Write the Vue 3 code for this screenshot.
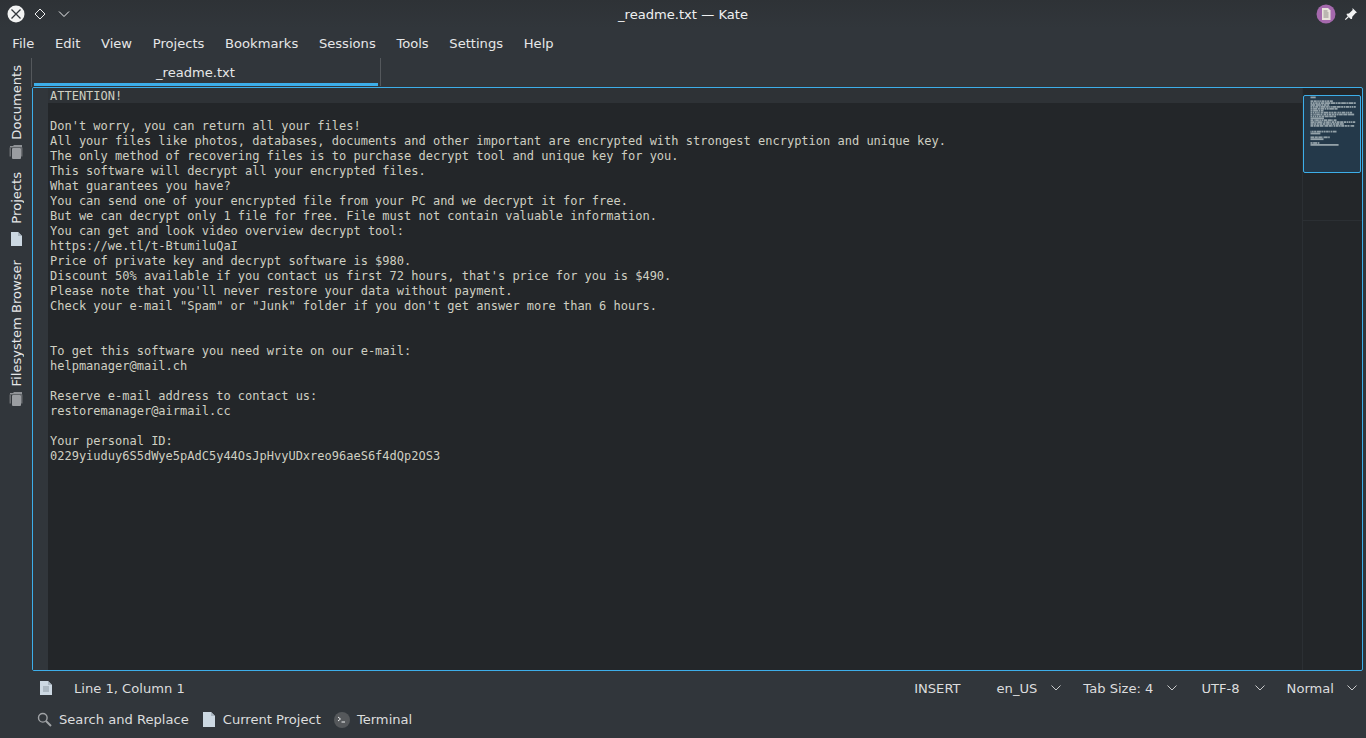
<template>
  <div class="window">
    <div class="titlebar">
      <div class="title-left">
        <svg class="ic-close" width="18" height="18" viewBox="0 0 18 18">
          <circle cx="9" cy="9" r="8.5" fill="#f2f3f3" />
          <path d="M4.5 4.5l9 9M13.5 4.5l-9 9" stroke="#31363b" stroke-width="1.3" />
        </svg>
        <svg class="ic-diamond" width="12" height="12" viewBox="0 0 12 12">
          <path d="M6 1l5 5-5 5-5-5z" fill="none" stroke="#eff0f1" stroke-width="1" />
        </svg>
        <svg class="ic-chevron" width="12" height="8" viewBox="0 0 12 8">
          <path d="M1 1.5l5 5 5-5" fill="none" stroke="#eff0f1" stroke-width="1" />
        </svg>
      </div>
      <div class="title-text">_readme.txt — Kate</div>
      <div class="title-right">
        <svg width="20" height="20" viewBox="0 0 20 20">
          <circle cx="10" cy="10" r="9.5" fill="#a569ad" />
          <path d="M6 4h6l2.500 2.500V16H6z" fill="#e8e4dc" />
          <path d="M7.500 7h4M7.500 9h5M7.500 11h5M7.500 13h5" stroke="#8d8a86" stroke-width="1" />
        </svg>
        <svg width="14" height="14" viewBox="0 0 14 14">
          <path d="M8.500 1l4.500 4.500-1.300.6-3.400 3.600-.3 2.300-1.300 0-4-4 0-1.300 2.300-.3 3.600-3.400z" fill="#f2f3f3" />
          <path d="M4.500 9.500L1.300 12.700" stroke="#f2f3f3" stroke-width="1.200" />
        </svg>
      </div>
    </div>

    <div class="menubar">
      <span v-for="m in menus" :key="m" class="menu-item">{{ m }}</span>
    </div>

    <div class="body">
      <div class="sidebar">
        <div v-for="s in sideItems" :key="s.label" class="side-item" :class="s.icon">
          <span class="side-label">{{ s.label }}</span>
          <svg v-if="s.icon === 'stack'" width="14" height="14" viewBox="0 0 14 14">
            <path d="M1 1h3l1-1h8v2.500H1z" fill="#8f9296" />
            <rect x="0.500" y="2.500" width="1.500" height="9" fill="#6c6f73" />
            <rect x="12" y="2.500" width="1.500" height="9" fill="#6c6f73" />
            <rect x="3" y="3" width="9" height="11" rx="1" fill="#9a9da1" />
          </svg>
          <svg v-else width="14" height="14" viewBox="0 0 14 14">
            <path d="M2 0h7l4 4v10H2z" fill="#ccd8e2" />
            <path d="M9 0l4 4H9z" fill="#a9b5bf" />
          </svg>
        </div>
      </div>

      <div class="main">
        <div class="tabbar">
          <div class="tab-wrap">
            <div class="tab">_readme.txt</div>
          </div>
        </div>

        <div class="editor">
          <div class="gutter"></div>
          <div class="code">
            <div
              v-for="(line, i) in lines"
              :key="i"
              class="code-line"
              :class="{ current: i === 0 }"
            >{{ line }}</div>
          </div>
          <div class="minimap">
            <div class="mini-view"></div>
            <svg class="mini-text" width="60" height="60" viewBox="0 0 60 60">
              <rect
                v-for="(r, i) in miniRects"
                :key="i"
                :x="r.x"
                :y="r.y"
                :width="r.w"
                height="1.800"
                fill="#b8c4c8"
                opacity="0.75"
              />
            </svg>
            <div class="mini-end"></div>
          </div>
        </div>

        <div class="statusbar">
          <svg class="status-doc" width="14" height="16" viewBox="0 0 14 16">
            <path d="M1 1h8l4 4v10H1z" fill="#ccd8e2" />
            <path d="M9 1l4 4H9z" fill="#a9b5bf" />
            <path d="M4 7h6M4 9h6M4 11h6" stroke="#8a97a1" stroke-width="1" />
          </svg>
          <span class="status-pos">Line 1, Column 1</span>
          <span class="status-mode">INSERT</span>
          <span class="status-item s-lang">en_US<svg class="chev" width="10" height="6" viewBox="0 0 10 6"><path d="M.5.5L5 5 9.500.5" fill="none" stroke="#c8cacb" /></svg></span>
          <span class="status-item s-tab">Tab Size: 4<svg class="chev" width="10" height="6" viewBox="0 0 10 6"><path d="M.5.5L5 5 9.500.5" fill="none" stroke="#c8cacb" /></svg></span>
          <span class="status-item s-enc">UTF-8<svg class="chev" width="10" height="6" viewBox="0 0 10 6"><path d="M.5.5L5 5 9.500.5" fill="none" stroke="#c8cacb" /></svg></span>
          <span class="status-item s-mode">Normal<svg class="chev" width="10" height="6" viewBox="0 0 10 6"><path d="M.5.5L5 5 9.500.5" fill="none" stroke="#c8cacb" /></svg></span>
        </div>
      </div>
    </div>

    <div class="toolbar">
      <span class="tool">
        <svg width="15" height="15" viewBox="0 0 15 15">
          <circle cx="5.800" cy="5.800" r="4.300" fill="none" stroke="#a0a3a6" stroke-width="1.400" />
          <path d="M9 9l5 5" stroke="#a0a3a6" stroke-width="2" />
        </svg>
        Search and Replace
      </span>
      <span class="tool">
        <svg width="14" height="15" viewBox="0 0 14 15">
          <path d="M1 0h8l4 4v11H1z" fill="#ccd8e2" />
          <path d="M9 0l4 4H9z" fill="#a9b5bf" />
        </svg>
        Current Project
      </span>
      <span class="tool">
        <svg width="16" height="16" viewBox="0 0 16 16">
          <circle cx="8" cy="8" r="8" fill="#55585b" />
          <path d="M4 5l2.500 2L4 9M7.500 10H11" fill="none" stroke="#eff0f1" stroke-width="1" />
        </svg>
        Terminal
      </span>
    </div>
  </div>
</template>

<script setup>
import { computed } from 'vue'

const menus = ['File', 'Edit', 'View', 'Projects', 'Bookmarks', 'Sessions', 'Tools', 'Settings', 'Help']

const sideItems = [
  { label: 'Documents', icon: 'stack' },
  { label: 'Projects', icon: 'doc' },
  { label: 'Filesystem Browser', icon: 'stack' }
]

const lines = [
  'ATTENTION!',
  '',
  "Don't worry, you can return all your files!",
  'All your files like photos, databases, documents and other important are encrypted with strongest encryption and unique key.',
  'The only method of recovering files is to purchase decrypt tool and unique key for you.',
  'This software will decrypt all your encrypted files.',
  'What guarantees you have?',
  'You can send one of your encrypted file from your PC and we decrypt it for free.',
  'But we can decrypt only 1 file for free. File must not contain valuable information.',
  'You can get and look video overview decrypt tool:',
  'https://we.tl/t-BtumiluQaI',
  'Price of private key and decrypt software is $980.',
  "Discount 50% available if you contact us first 72 hours, that's price for you is $490.",
  "Please note that you'll never restore your data without payment.",
  'Check your e-mail "Spam" or "Junk" folder if you don\'t get answer more than 6 hours.',
  '',
  '',
  'To get this software you need write on our e-mail:',
  'helpmanager@mail.ch',
  '',
  'Reserve e-mail address to contact us:',
  'restoremanager@airmail.cc',
  '',
  'Your personal ID:',
  '0229yiuduy6S5dWye5pAdC5y44OsJpHvyUDxreo96aeS6f4dQp2OS3'
]

// little word blocks for the minimap, long lines wrap at the map width
const miniRects = computed(() => {
  const charW = 0.52
  const wrapAt = 94
  const rects = []
  let row = 0
  for (const line of lines) {
    let col = 0
    for (const word of line.split(' ')) {
      if (word && col + word.length > wrapAt) {
        col = 0
        row++
      }
      if (word) rects.push({ x: 7.5 + col * charW, y: 8.5 + row * 1.9, w: word.length * charW })
      col += word.length + 1
    }
    row++
  }
  return rects
})
</script>

<style scoped>
.window {
  width: 1366px;
  height: 738px;
  display: flex;
  flex-direction: column;
  overflow: hidden;
  background: #31363b;
  color: #eff0f1;
  font-family: "DejaVu Sans", sans-serif;
  font-size: 13.1px;
}

.titlebar {
  height: 28px;
  flex: none;
  display: flex;
  align-items: center;
  justify-content: space-between;
  position: relative;
  padding: 0 8px 0 7px;
  background: linear-gradient(#2e3236, #31363b);
}

.title-left,
.title-right {
  display: flex;
  align-items: center;
}

.ic-diamond {
  margin-left: 9px;
}

.ic-chevron {
  margin-left: 12px;
}

.title-right {
  gap: 8px;
}

.title-text {
  position: absolute;
  left: 0;
  right: 0;
  text-align: center;
  pointer-events: none;
}

.menubar {
  height: 30px;
  flex: none;
  display: flex;
  align-items: center;
  padding-left: 2px;
}

.menu-item {
  padding: 0 10.35px;
  color: #e6e7e8;
}

.body {
  flex: 1;
  min-height: 0;
  display: flex;
}

.sidebar {
  width: 32px;
  flex: none;
  display: flex;
  flex-direction: column;
  align-items: center;
  gap: 13px;
  padding-top: 7px;
}

.side-item {
  display: flex;
  flex-direction: column;
  align-items: center;
  gap: 9px;
}

.side-item.stack {
  gap: 5px;
}

.side-item:last-child {
  margin-top: 1px;
}

.side-label {
  writing-mode: vertical-rl;
  transform: rotate(180deg);
  line-height: 16px;
  margin-left: 2px;
  color: #e6e7e8;
}

.main {
  flex: 1;
  min-width: 0;
  display: flex;
  flex-direction: column;
}

.tabbar {
  height: 29px;
  flex: none;
  margin-left: -1px;
  border-left: 1px solid #54585c;
  display: flex;
}

.tab-wrap {
  height: 28px;
  padding: 0 2px 0 2px;
  border-right: 1px solid #54585c;
}

.tab {
  width: 344px;
  height: 28px;
  box-sizing: border-box;
  padding-right: 21px;
  display: flex;
  align-items: center;
  justify-content: center;
  box-shadow: inset 0 -3px 0 #3daee9;
  color: #e6e7e8;
}

.editor {
  flex: 1;
  min-height: 0;
  margin-right: 3px;
  display: flex;
  box-sizing: border-box;
  border: 1px solid #3daee9;
  border-radius: 2px;
  background: #232629;
}

.gutter {
  width: 15px;
  flex: none;
  background: #31363b;
}

.code {
  flex: 1;
  min-width: 0;
  font-family: "DejaVu Sans Mono", monospace;
  font-size: 12px;
  line-height: 17px;
  color: #cfcfc2;
}

.code-line {
  height: 15px;
  padding-left: 2px;
  white-space: pre;
}

.code-line.current {
  background: #2e3236;
}

.minimap {
  width: 60px;
  flex: none;
  position: relative;
  box-sizing: border-box;
  border-left: 1px solid #2b2f33;
}

.mini-view {
  position: absolute;
  left: 0;
  top: 7px;
  width: 58px;
  height: 78px;
  box-sizing: border-box;
  border: 1px solid #3daee9;
  border-radius: 2px;
  background: #24394a;
}

.mini-text {
  position: absolute;
  left: 0;
  top: 0;
}

.mini-end {
  position: absolute;
  left: 0;
  right: 0;
  top: 132px;
  height: 1px;
  background: #2b2f33;
}

.statusbar {
  height: 34px;
  flex: none;
  display: flex;
  align-items: center;
  padding-right: 9px;
  color: #dcddde;
}

.status-doc {
  margin-left: 7px;
}

.status-pos {
  margin-left: 21px;
}

.status-mode {
  margin-left: auto;
  margin-right: 36px;
}

.status-item {
  display: flex;
  align-items: center;
}

.chev {
  margin-left: 14px;
}

.s-lang,
.s-enc {
  margin-right: 22px;
}

.s-tab {
  margin-right: 24px;
}

.s-enc .chev {
  margin-left: 15px;
}

.s-mode .chev {
  margin-left: 13px;
}

.toolbar {
  height: 33px;
  flex: none;
  display: flex;
  align-items: center;
  gap: 13px;
  padding-left: 37px;
  padding-bottom: 4px;
  box-sizing: border-box;
  color: #dcddde;
}

.tool {
  display: flex;
  align-items: center;
  gap: 7px;
}
</style>
